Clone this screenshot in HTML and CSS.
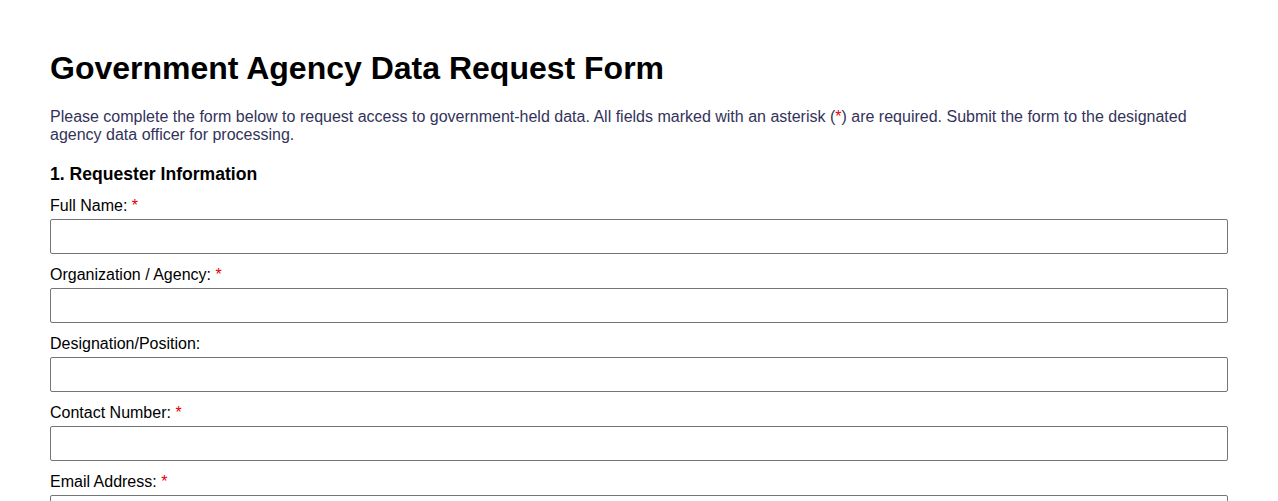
FILE: index.html
```html
<!DOCTYPE html>
<html lang="en">
<head>
<meta charset="utf-8">
<title>Government Agency Data Request Form</title>
<link rel="stylesheet" href="styles.css">
</head>
<body>
<main class="page">
  <h1 class="title">Government Agency Data Request Form</h1>
  <p class="intro">Please complete the form below to request access to government-held data. All fields marked with an asterisk (<span class="req">*</span>) are required. Submit the form to the designated agency data officer for processing.</p>
  <form class="form">
    <h2 class="section-title">1. Requester Information</h2>
    <div class="field">
      <label class="label" for="fullname">Full Name: <span class="req">*</span></label>
      <input class="input" id="fullname" type="text">
    </div>
    <div class="field">
      <label class="label" for="org">Organization / Agency: <span class="req">*</span></label>
      <input class="input" id="org" type="text">
    </div>
    <div class="field">
      <label class="label" for="designation">Designation/Position:</label>
      <input class="input" id="designation" type="text">
    </div>
    <div class="field">
      <label class="label" for="contact">Contact Number: <span class="req">*</span></label>
      <input class="input" id="contact" type="text">
    </div>
    <div class="field">
      <label class="label" for="email">Email Address: <span class="req">*</span></label>
      <input class="input" id="email" type="email">
    </div>
  </form>
</main>
</body>
</html>
```
FILE: styles.css
```css
html, body {
  margin: 0;
  padding: 0;
  background: #ffffff;
}
body {
  font-family: "Liberation Sans", Arial, sans-serif;
  color: #000000;
}
.page {
  padding: 50px 50px 40px 50px;
}
.title {
  margin: 0;
  font-size: 32px;
  line-height: 37px;
  font-weight: bold;
}
.intro {
  margin: 21px 0 0 0;
  font-size: 16px;
  line-height: 18px;
  color: #33335a;
}
.req {
  color: #e00000;
}
.form {
  margin-top: 20px;
}
.section-title {
  margin: 0 0 12px 0;
  font-size: 17.6px;
  line-height: 21px;
  font-weight: bold;
}
.field {
  display: flex;
  flex-direction: column;
  margin-bottom: 12px;
}
.label {
  font-size: 16px;
  line-height: 18px;
  margin-bottom: 4px;
}
.input {
  box-sizing: border-box;
  width: 100%;
  height: 35px;
  margin: 0;
  border: 1px solid #767676;
  border-radius: 2px;
  background: #ffffff;
  font-family: inherit;
  font-size: 16px;
  padding: 4px 8px;
}
```
